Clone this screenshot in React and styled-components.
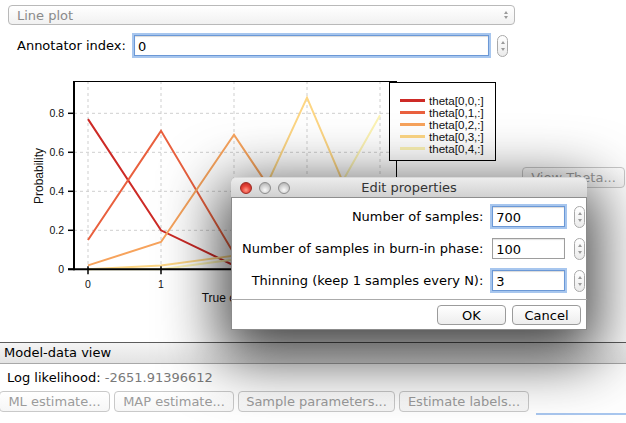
import React from 'react';
import styled, { createGlobalStyle } from 'styled-components';

const UI_FONT = '"Lucida Grande", "DejaVu Sans", sans-serif';
const CHART_FONT = '"Liberation Sans", Arial, sans-serif';

const GlobalStyle = createGlobalStyle`
  html, body {
    margin: 0;
    padding: 0;
    background: #fff;
  }
  body {
    font-family: ${UI_FONT};
    font-size: 13px;
    color: #000;
  }
`;

// chart scale (svg coordinates, svg starts at page y = 62)
const X0 = 88;
const DX = 73;
const Y0 = 207.3;
const YS = 195;
const px = (i) => X0 + DX * i;
const py = (v) => Y0 - v * YS;

const SERIES = [
  { name: 'theta[0,0,:]', color: '#cd2a26', values: [0.77, 0.2, 0.02, 0.01, 0.005] },
  { name: 'theta[0,1,:]', color: '#e9603e', values: [0.15, 0.71, 0.08, 0.02, 0.01] },
  { name: 'theta[0,2,:]', color: '#f7a35c', values: [0.02, 0.14, 0.69, 0.13, 0.03] },
  { name: 'theta[0,3,:]', color: '#fdd684', values: [0.0, 0.02, 0.07, 0.88, 0.0] },
  { name: 'theta[0,4,:]', color: '#fcf3b4', values: [0.0, 0.0, 0.05, 0.13, 0.79] },
];

const Y_TICKS = [0, 0.2, 0.4, 0.6, 0.8];
const X_TICKS = [0, 1, 2, 3, 4];
// ticks 2..4 sit under the dialog, their labels never show
const X_LABELS = [0, 1];

const ThetaChart = () => (
  <ChartSvg width="515" height="280" viewBox="0 0 515 280">
    {/* grid */}
    {X_TICKS.map((i) => (
      <line key={`gx${i}`} x1={px(i)} x2={px(i)} y1={19} y2={Y0} stroke="#cfcfcf" strokeDasharray="3 3" />
    ))}
    {Y_TICKS.slice(1).map((v) => (
      <line key={`gy${v}`} x1={74} x2={397} y1={py(v)} y2={py(v)} stroke="#cfcfcf" strokeDasharray="3 3" />
    ))}

    {/* frame */}
    <line x1={74} x2={397} y1={19.5} y2={19.5} stroke="#000" />
    <line x1={396.5} x2={396.5} y1={19} y2={Y0} stroke="#000" />

    {/* series */}
    {SERIES.map((s) => (
      <polyline
        key={s.name}
        points={s.values.map((v, i) => `${px(i)},${py(v)}`).join(' ')}
        fill="none"
        stroke={s.color}
        strokeWidth="2"
      />
    ))}

    {/* axes */}
    <line x1={74} x2={74} y1={19} y2={Y0 + 1} stroke="#000" strokeWidth="2" />
    <line x1={68} x2={397} y1={Y0} y2={Y0} stroke="#000" strokeWidth="2" />
    {Y_TICKS.map((v) => (
      <g key={`ty${v}`}>
        <line x1={68} x2={74} y1={py(v)} y2={py(v)} stroke="#000" strokeWidth="1.5" />
        <text x={64} y={py(v) + 4} textAnchor="end" fontSize="10.5" fontFamily={CHART_FONT} fill="#111">
          {v === 0 ? '0' : v.toFixed(1)}
        </text>
      </g>
    ))}
    {X_TICKS.map((i) => (
      <line key={`tx${i}`} x1={px(i)} x2={px(i)} y1={Y0 - 3} y2={Y0 + 5} stroke="#000" strokeWidth="1.5" />
    ))}
    {X_LABELS.map((i) => (
      <text key={`lx${i}`} x={px(i)} y={226} textAnchor="middle" fontSize="10.5" fontFamily={CHART_FONT} fill="#111">
        {i}
      </text>
    ))}

    <text
      x={43}
      y={114}
      transform="rotate(-90 43 114)"
      textAnchor="middle"
      fontSize="12"
      fontFamily={CHART_FONT}
      fill="#111"
    >
      Probability
    </text>
    <text x={235.5} y={240} textAnchor="middle" fontSize="12" fontFamily={CHART_FONT} fill="#111">
      True classes
    </text>

    {/* legend */}
    <rect x={389.5} y={20.5} width={106} height={78} fill="#fff" stroke="#000" />
    {SERIES.map((s, i) => (
      <g key={`lg${i}`}>
        <line x1={400} x2={425} y1={38.5 + 12 * i} y2={38.5 + 12 * i} stroke={s.color} strokeWidth="3" />
        <text x={429} y={42.5 + 12 * i} fontSize="11.6" fontFamily={CHART_FONT} fill="#111">
          {s.name}
        </text>
      </g>
    ))}
  </ChartSvg>
);

const Stepper = () => (
  <StepperBox>
    <Arrow $up />
    <Arrow />
  </StepperBox>
);

const DIALOG_ROWS = [
  { label: 'Number of samples:', value: '700', focused: true },
  { label: 'Number of samples in burn-in phase:', value: '100', focused: false },
  { label: 'Thinning (keep 1 samples every N):', value: '3', focused: true },
];

const App = () => (
  <>
    <GlobalStyle />
    <Window>
      <TopForm>
        <Combo>
          <ComboText>Line plot</ComboText>
          <ComboArrows>
            <Arrow $up />
            <Arrow />
          </ComboArrows>
        </Combo>
        <FieldRow>
          <FieldLabel>Annotator index:</FieldLabel>
          <TextField $focused $width={355}>0</TextField>
          <Stepper />
        </FieldRow>
      </TopForm>

      <ChartArea>
        <ThetaChart />
        <SideColumn>
          <PushButton $disabled $width={103}>View Theta...</PushButton>
        </SideColumn>
      </ChartArea>

      <SectionHeader>Model-data view</SectionHeader>
      <LogRow>
        Log likelihood: <LogValue>-2651.91396612</LogValue>
      </LogRow>
      <ButtonRow>
        <PushButton $disabled $width={111}>ML estimate...</PushButton>
        <PushButton $disabled $width={120}>MAP estimate...</PushButton>
        <PushButton $disabled $width={157}>Sample parameters...</PushButton>
        <PushButton $disabled $width={130}>Estimate labels...</PushButton>
      </ButtonRow>
      <FocusRow>
        <FocusEdge />
      </FocusRow>

      <Dialog>
        <TitleBar>
          <Lights>
            <Light $red />
            <Light />
            <Light />
          </Lights>
          <Title>Edit properties</Title>
          <span />
        </TitleBar>
        <DialogBody>
          {DIALOG_ROWS.map((row) => (
            <React.Fragment key={row.label}>
              <DialogLabel>{row.label}</DialogLabel>
              <TextField $focused={row.focused} $width={73}>{row.value}</TextField>
              <Stepper />
            </React.Fragment>
          ))}
        </DialogBody>
        <DialogFooter>
          <PushButton $width={69} $center>OK</PushButton>
          <PushButton $width={69} $center>Cancel</PushButton>
        </DialogFooter>
      </Dialog>
    </Window>
  </>
);

const Window = styled.div`
  position: relative;
  width: 626px;
  height: 423px;
  overflow: hidden;
  background: #fff;
  display: flex;
  flex-direction: column;
`;

const TopForm = styled.div`
  display: flex;
  flex-direction: column;
  gap: 9px;
  padding: 5px 0 0 8px;
  height: 57px;
  box-sizing: border-box;
`;

const Combo = styled.div`
  width: 507px;
  height: 20px;
  box-sizing: border-box;
  border: 1px solid #b9b9b9;
  border-radius: 4px;
  background: linear-gradient(#ffffff, #f1f1f1);
  display: flex;
  align-items: center;
  justify-content: space-between;
  padding: 0 6px 0 8px;
`;

const ComboText = styled.span`
  color: #8a8a8a;
  font-size: 13px;
`;

const ComboArrows = styled.span`
  display: flex;
  flex-direction: column;
  gap: 2px;
`;

const Arrow = styled.span`
  width: 0;
  height: 0;
  border-left: 2.5px solid transparent;
  border-right: 2.5px solid transparent;
  ${(p) => (p.$up ? 'border-bottom: 3px solid #9a9a9a;' : 'border-top: 3px solid #9a9a9a;')}
`;

const FieldRow = styled.div`
  display: flex;
  align-items: center;
  padding-left: 9px;
  height: 23px;
`;

const FieldLabel = styled.span`
  width: 117px;
  white-space: nowrap;
`;

const TextField = styled.div`
  width: ${(p) => p.$width}px;
  height: 21px;
  box-sizing: border-box;
  padding: 1px 3px 0;
  display: flex;
  align-items: center;
  background: #fff;
  border: 1px solid ${(p) => (p.$focused ? '#6b98d6' : '#9d9d9d')};
  box-shadow: ${(p) =>
    p.$focused ? '0 0 0 2px #a7c6ee, inset 0 1px 1px rgba(0,0,0,0.15)' : 'inset 0 1px 1px rgba(0,0,0,0.12)'};
  font-size: 13px;
`;

const StepperBox = styled.div`
  width: 11px;
  height: 22px;
  margin-left: 8px;
  box-sizing: border-box;
  border: 1px solid #a9a9a9;
  border-radius: 6px;
  background: linear-gradient(#ffffff, #ebebeb);
  display: flex;
  flex-direction: column;
  align-items: center;
  justify-content: center;
  gap: 4px;
`;

const ChartArea = styled.div`
  display: flex;
  height: 280px;
  margin-top: 5px;
`;

const ChartSvg = styled.svg`
  display: block;
  flex: none;
`;

const SideColumn = styled.div`
  padding: 105px 0 0 7px;
`;

const PushButton = styled.div`
  width: ${(p) => p.$width}px;
  height: ${(p) => (p.$center ? 20 : 21)}px;
  flex: none;
  box-sizing: border-box;
  border: 1px solid ${(p) => (p.$disabled ? '#c9c9c9' : '#9b9b9b')};
  border-radius: 4px;
  background: linear-gradient(#ffffff, ${(p) => (p.$disabled ? '#f6f6f6' : '#ededed')});
  color: ${(p) => (p.$disabled ? '#9b9b9b' : '#000')};
  font-size: 13px;
  display: flex;
  align-items: center;
  justify-content: center;
  white-space: nowrap;
  overflow: hidden;
`;

const SectionHeader = styled.div`
  height: 25px;
  box-sizing: border-box;
  border-top: 1px solid #5c5c5c;
  border-bottom: 1px solid #a8a8a8;
  background: linear-gradient(#f4f4f4, #e3e3e3);
  padding-left: 4px;
  display: flex;
  align-items: center;
`;

const LogRow = styled.div`
  height: 32px;
  display: flex;
  align-items: center;
  padding-left: 7px;
  white-space: pre;
`;

const LogValue = styled.span`
  color: #7a7a7a;
`;

const ButtonRow = styled.div`
  display: flex;
  gap: 4px;
  margin-left: -1px;
`;

const FocusRow = styled.div`
  padding: 1px 0 0 536px;
`;

const FocusEdge = styled.div`
  height: 8px;
  border-top: 2px solid #a9c7ef;
`;

const Dialog = styled.div`
  position: absolute;
  left: 231px;
  top: 177px;
  width: 356px;
  height: 153px;
  box-sizing: border-box;
  background: #fff;
  border: 1px solid #8b8b8b;
  border-top: none;
  border-radius: 5px 5px 0 0;
  box-shadow: 0 18px 60px 10px rgba(0, 0, 0, 0.74);
  display: flex;
  flex-direction: column;
`;

const TitleBar = styled.div`
  height: 21px;
  flex: none;
  box-sizing: border-box;
  border-radius: 5px 5px 0 0;
  border-top: 1px solid #d8d8d8;
  border-bottom: 1px solid #8e8e8e;
  margin: 0 -1px;
  background: linear-gradient(#ececec, #d1d1d1);
  display: grid;
  grid-template-columns: 1fr auto 1fr;
  align-items: center;
`;

const Lights = styled.div`
  display: flex;
  gap: 7px;
  padding-left: 9px;
`;

const Light = styled.span`
  width: 12px;
  height: 12px;
  box-sizing: border-box;
  border-radius: 50%;
  border: 1px solid ${(p) => (p.$red ? '#9c2a22' : '#8d8d8d')};
  background: ${(p) =>
    p.$red
      ? 'radial-gradient(circle at 50% 70%, #ff9a88 0%, #e8463a 45%, #b5201a 100%)'
      : 'radial-gradient(circle at 50% 70%, #fafafa 0%, #d2d2d2 50%, #a5a5a5 100%)'};
`;

const Title = styled.span`
  color: #333;
  font-size: 13px;
`;

const DialogBody = styled.div`
  flex: 1;
  display: grid;
  grid-template-columns: 1fr 73px 11px;
  grid-auto-rows: 21px;
  column-gap: 9px;
  row-gap: 11px;
  align-items: center;
  padding: 8px 5px 0 10px;
  & ${StepperBox} {
    margin-left: 0;
  }
`;

const DialogLabel = styled.span`
  text-align: right;
  white-space: nowrap;
`;

const DialogFooter = styled.div`
  flex: none;
  border-top: 1px solid #ababab;
  margin: 0 -1px;
  padding: 5px 6px 4px;
  display: flex;
  justify-content: flex-end;
  gap: 6px;
`;

export default App;
